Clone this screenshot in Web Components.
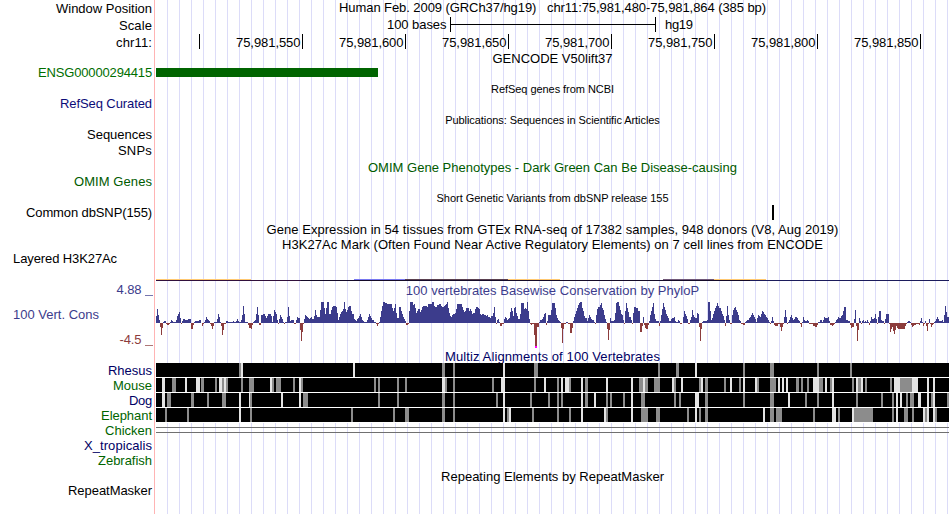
<!DOCTYPE html>
<html lang="en">
<head>
<meta charset="utf-8">
<title>Genome tracks</title>
<style>
  body {
    margin: 0;
    background: white;
    overflow: hidden;
  }
</style>
</head>
<body>
<genome-view>
  <track-row height="17" nudge="1">
    <fit-text slot="label" width="96">Window Position</fit-text>
    <fit-text width="427">Human Feb. 2009 (GRCh37/hg19)   chr11:75,981,480-75,981,864 (385 bp)</fit-text>
  </track-row>
  <track-row height="17" nudge="1">
    <fit-text slot="label" width="33">Scale</fit-text>
    <scale-bar></scale-bar>
  </track-row>
  <track-row height="17" nudge="1">
    <fit-text slot="label" width="36">chr11:</fit-text>
    <base-ruler></base-ruler>
  </track-row>
  <track-row height="14">
    <fit-text width="120">GENCODE V50lift37</fit-text>
  </track-row>
  <track-row height="16">
    <fit-text slot="label" width="114" color="#006e00">ENSG00000294415</fit-text>
    <feature-track items="156 3 222 9" color="#006400"></feature-track>
  </track-row>
  <track-row height="15">
    <fit-text width="123" small>RefSeq genes from NCBI</fit-text>
  </track-row>
  <track-row height="16">
    <fit-text slot="label" width="92" color="#0c0c78">RefSeq Curated</fit-text>
  </track-row>
  <track-row height="15">
    <fit-text width="214.5" small>Publications: Sequences in Scientific Articles</fit-text>
  </track-row>
  <track-row height="16">
    <fit-text slot="label" width="65">Sequences</fit-text>
  </track-row>
  <track-row height="17">
    <fit-text slot="label" width="34">SNPs</fit-text>
  </track-row>
  <track-row height="14">
    <fit-text width="369" color="#005a00">OMIM Gene Phenotypes - Dark Green Can Be Disease-causing</fit-text>
  </track-row>
  <track-row height="16">
    <fit-text slot="label" width="78" color="#005a00">OMIM Genes</fit-text>
  </track-row>
  <track-row height="15">
    <fit-text width="232" small>Short Genetic Variants from dbSNP release 155</fit-text>
  </track-row>
  <track-row height="17">
    <fit-text slot="label" width="126">Common dbSNP(155)</fit-text>
    <feature-track items="772 0 2 15" color="#000"></feature-track>
  </track-row>
  <track-row height="15">
    <fit-text width="572">Gene Expression in 54 tissues from GTEx RNA-seq of 17382 samples, 948 donors (V8, Aug 2019)</fit-text>
  </track-row>
  <track-row height="14">
    <fit-text width="541">H3K27Ac Mark (Often Found Near Active Regulatory Elements) on 7 cell lines from ENCODE</fit-text>
  </track-row>
  <track-row height="32" wide>
    <fit-text slot="label" width="104">Layered H3K27Ac</fit-text>
    <signal-track></signal-track>
  </track-row>
  <conservation-track></conservation-track>
  <track-row height="14">
    <fit-text width="215" color="#000064">Multiz Alignments of 100 Vertebrates</fit-text>
  </track-row>
  <track-row height="15">
    <fit-text slot="label" width="44" color="#000064">Rhesus</fit-text>
    <align-track species="rhesus"></align-track>
  </track-row>
  <track-row height="15">
    <fit-text slot="label" width="39" color="#006400">Mouse</fit-text>
    <align-track species="mouse"></align-track>
  </track-row>
  <track-row height="15">
    <fit-text slot="label" width="23" color="#000064">Dog</fit-text>
    <align-track species="dog"></align-track>
  </track-row>
  <track-row height="15">
    <fit-text slot="label" width="51" color="#006400">Elephant</fit-text>
    <align-track species="elephant"></align-track>
  </track-row>
  <track-row height="15">
    <fit-text slot="label" width="47" color="#006400">Chicken</fit-text>
    <feature-track items="156 4 793 1,156 9 793 1" color="#707070"></feature-track>
  </track-row>
  <track-row height="15">
    <fit-text slot="label" width="68" color="#000064">X_tropicalis</fit-text>
  </track-row>
  <track-row height="16">
    <fit-text slot="label" width="54" color="#006400">Zebrafish</fit-text>
  </track-row>
  <track-row height="14">
    <fit-text width="223">Repeating Elements by RepeatMasker</fit-text>
  </track-row>
  <track-row height="31">
    <fit-text slot="label" width="84">RepeatMasker</fit-text>
  </track-row>
</genome-view>

<script>
// All track graphics use image x coordinates; the data area starts at LEFT.
const LEFT = 156;
const WIDTH = 793;

const rect = (x, y, w, h, fill) =>
  `<rect x="${ x }" y="${ y }" width="${ w }" height="${ h }" fill="${ fill }"/>`;

const svgTrack = (height, body) => `
  <style>
    :host { display: block; }
    svg { display: block; overflow: visible; }
    text { font: 13px "Liberation Sans", sans-serif; }
  </style>
  <svg width="${ WIDTH }" height="${ height }" viewBox="${ LEFT } 0 ${ WIDTH } ${ height }">
    <g shape-rendering="crispEdges">${ body }</g>
  </svg>`;


class GenomeView extends HTMLElement {
  constructor() {
    super();
    this.attachShadow({mode: "open"}).innerHTML = `
      <style>
        :host {
          display: flex;
          flex-direction: column;
          width: 950px;
          height: 514px;
          overflow: hidden;
          font: 13px/15px "Liberation Sans", Arial, sans-serif;
          color: black;
          background:
            linear-gradient(#ffb4b4, #ffb4b4) 154px 0 / 1px 100% no-repeat,
            repeating-linear-gradient(to right, #dcdcf8 0 1px, transparent 1px 12px) 167px 0 / 783px 100% no-repeat;
        }
      </style>
      <slot></slot>`;
  }
}


// One line of text, tracked out or in to a known width.
class FitText extends HTMLElement {
  constructor() {
    super();
    this.attachShadow({mode: "open"}).innerHTML = `
      <style>
        :host { display: block; flex: none; width: max-content; }
        :host([small]) { font-size: 11px; padding-top: 1px; }
        slot { white-space: pre; }
      </style>
      <slot></slot>`;
  }

  connectedCallback() {
    if (this.hasAttribute("color"))
      this.style.color = this.getAttribute("color");

    const target = parseFloat(this.getAttribute("width"));
    const natural = this.getBoundingClientRect().width;
    this.style.letterSpacing = `${ (target - natural) / this.textContent.length }px`;
  }
}


class TrackRow extends HTMLElement {
  constructor() {
    super();
    this.attachShadow({mode: "open"}).innerHTML = `
      <style>
        :host {
          display: grid;
          grid-template-columns: 152px 793px;
          column-gap: 4px;
          flex: none;
        }
        #label { display: flex; justify-content: flex-end; }
        :host([wide]) #label { justify-content: flex-start; padding-left: 13px; }
        #track { display: flex; justify-content: center; }
      </style>
      <div id="label"><slot name="label"></slot></div>
      <div id="track"><slot></slot></div>`;
  }

  connectedCallback() {
    this.style.height = `${ this.getAttribute("height") }px`;
    if (this.hasAttribute("nudge"))
      this.shadowRoot.getElementById("label").style.paddingTop = `${ this.getAttribute("nudge") }px`;
  }
}


class ScaleBar extends HTMLElement {
  constructor() {
    super();
    this.attachShadow({mode: "open"}).innerHTML = svgTrack(17,
      rect(450, 0, 1, 15, "#000") + rect(655, 0, 1, 15, "#000") + rect(450, 7, 206, 1, "#000") +
      `<text x="387" y="12" textLength="59.5">100 bases</text>
       <text x="665" y="12" textLength="28">hg19</text>`);
  }
}


class BaseRuler extends HTMLElement {
  constructor() {
    super();
    let body = rect(199, 0, 1, 15, "#000");
    for (let i = 1; i < 8; i++) {
      const x = 199 + i * 103;
      body += rect(x, 0, 1, 15, "#000");
      body += `<text x="${ x - 66 }" y="13" textLength="64.5">75,981,${ 500 + i * 50 }</text>`;
    }
    this.attachShadow({mode: "open"}).innerHTML = svgTrack(17, body);
  }
}


// items: comma separated "x y width height"
class FeatureTrack extends HTMLElement {
  constructor() {
    super();
    this.attachShadow({mode: "open"});
  }

  connectedCallback() {
    const color = this.getAttribute("color");
    this.shadowRoot.innerHTML = svgTrack(15,
      this.getAttribute("items").split(",").map(i => rect(...i.split(" "), color)).join(""));
  }
}


class SignalTrack extends HTMLElement {
  constructor() {
    super();
    this.attachShadow({mode: "open"}).innerHTML = svgTrack(32,
      rect(156, 28, 95, 1, "#ffc870") +
      rect(354, 28, 51, 1, "#7878f0") +
      rect(405, 28, 103, 1, "#5a4050") +
      rect(508, 28, 52, 1, "#ffc870") +
      rect(663, 28, 51, 1, "#705878") +
      rect(714, 28, 52, 1, "#ffc870") +
      rect(156, 29, 145, 1, "#32103c") +
      rect(301, 29, 449, 1, "#140a28") +
      rect(750, 29, 199, 1, "#1c1c5c"));
  }
}


// PhyloP scores in pixels, one panel per 200px: "offset height", held until the next offset.
const PHYLOP = [
  [150, `6 7,7 14,8 8,9 3,10 -4,11 -12,12 -5,13 1,14 2,16 -1,17 -2,19 -1,20 1,21 3,22 2,23 1,26 3,27 7,28 9,29 11,
    30 5,31 -1,32 2,33 4,35 3,38 4,41 -6,43 -2,44 1,45 2,49 3,51 0,52 -3,53 -1,54 1,55 3,56 6,57 4,58 3,59 2,60 -1,
    61 -3,62 -6,63 -3,64 1,67 4,68 9,69 6,70 1,71 -3,72 -12,73 -7,74 -1,76 2,78 1,83 2,84 1,86 2,87 4,88 2,89 1,
    91 3,92 8,93 17,94 9,95 1,98 -2,99 -5,101 -6,102 -2,103 1,104 2,105 3,106 9,107 16,108 8,109 -2,111 8,113 9,
    115 7,116 5,117 7,118 9,121 7,122 1,123 7,124 13,125 11,126 9,127 3,128 -1,129 4,130 8,131 6,132 4,133 1,
    134 -1,135 1,137 6,138 16,139 7,140 2,141 3,144 -1,146 3,147 6,148 5,150 -7,151 -18,152 -9,153 -1,154 4,155 8,
    156 7,157 6,158 5,159 4,160 5,161 6,162 4,164 7,165 13,166 8,167 6,170 13,171 21,174 15,175 9,176 15,177 21,
    179 9,181 13,182 16,183 17,186 16,187 10,188 3,189 6,190 9,191 11,192 12,193 14,194 21,195 14,196 11,197 13,
    198 16,199 17`],
  [350, `0 17,1 12,2 9,4 4,5 3,6 2,7 4,8 5,9 7,10 9,11 6,12 3,13 2,14 1,17 3,18 6,19 9,20 7,21 5,22 3,24 1,26 -1,27 -3,
    28 -1,29 1,30 6,31 12,32 17,33 21,35 20,37 19,42 15,43 12,44 15,45 19,46 10,47 5,49 16,51 12,52 9,53 6,54 4,
    55 2,56 -2,58 -1,59 12,60 21,63 18,64 19,65 15,66 10,67 12,68 14,70 11,71 13,72 16,73 17,77 16,78 19,82 21,
    84 17,85 16,87 18,89 19,91 17,92 16,94 17,95 18,96 19,97 21,98 15,99 10,100 7,101 6,102 8,103 9,105 10,
    106 14,107 19,112 16,113 13,114 11,115 12,116 15,119 12,120 14,121 12,122 9,123 10,125 14,126 16,128 15,129 14,
    130 9,131 8,132 9,134 8,136 7,137 8,138 6,140 5,141 7,143 10,144 16,145 6,146 -1,147 3,148 4,149 1,150 -3,
    152 -1,154 4,155 6,156 5,157 3,158 4,159 5,160 11,161 15,162 12,163 7,164 15,165 16,166 10,167 7,168 4,170 9,
    171 20,174 14,175 15,176 14,177 21,178 12,179 4,180 -1,181 -2,182 -1,184 -12,185 -25,187 -4,189 1,190 3,192 4,
    193 6,194 9,195 10,196 -2,197 2,198 8`],
  [550, `0 8,1 13,2 20,5 15,6 8,7 5,8 3,9 2,10 1,11 -5,12 -20,13 -6,14 -1,16 1,18 -1,20 -10,22 -5,23 2,24 6,25 9,26 12,
    27 15,28 18,29 20,30 21,32 15,33 12,34 7,35 5,37 2,38 5,39 8,40 6,41 4,42 3,44 1,45 -1,46 8,47 14,48 16,
    50 18,51 20,52 15,53 13,54 8,55 4,56 1,57 -6,58 -17,59 -7,60 5,61 2,64 3,65 10,66 20,67 21,69 17,70 13,71 9,
    72 8,73 3,74 -1,75 12,76 20,77 15,78 11,79 6,81 3,82 -1,83 10,84 16,86 15,88 12,90 -9,92 -3,93 6,94 -2,95 -5,
    96 -6,98 -2,99 2,100 8,101 12,102 16,103 20,104 9,105 4,106 2,109 -3,110 2,111 8,112 14,113 20,114 16,115 13,
    116 9,117 7,118 5,119 2,121 4,122 5,124 6,125 2,126 1,128 3,129 2,130 -1,132 0,133 6,134 12,135 9,136 7,137 4,
    138 -1,140 3,141 6,142 13,143 8,144 6,145 5,147 10,148 9,149 -4,150 -18,151 -6,152 1,153 2,157 3,158 21,
    160 12,161 3,162 5,163 9,164 12,165 15,166 17,167 20,168 17,169 15,171 12,172 9,173 7,174 3,175 -3,176 7,
    177 17,178 8,179 3,180 -1,182 8,183 13,184 15,185 16,186 13,187 11,188 8,189 3,190 2,191 -1,193 -2,195 1,196 2,
    197 3,199 5`],
  [750, `0 6,1 8,2 10,3 8,4 6,5 4,6 1,7 5,8 8,9 7,10 6,11 9,12 12,13 11,14 9,15 8,16 6,17 5,18 3,19 1,20 -1,21 2,22 6,
    23 2,24 -2,25 -3,28 -1,30 -4,31 -8,32 -4,33 -1,34 6,35 13,36 6,37 -1,38 1,39 3,40 6,41 8,42 5,43 3,44 4,45 6,
    47 5,48 3,49 2,50 -1,51 -4,52 1,53 6,54 3,55 2,57 3,58 2,59 -1,63 -3,65 -4,67 -2,68 1,70 3,72 1,73 3,74 6,
    75 5,78 6,79 2,80 -2,82 -3,83 -2,84 -1,85 1,86 3,87 4,88 6,89 5,91 7,92 8,93 12,94 16,96 3,98 2,100 -2,
    101 -5,102 -4,104 4,105 13,106 -3,107 -18,108 -7,109 5,110 2,111 -1,112 2,113 3,114 1,115 2,116 1,117 3,118 1,
    119 -2,120 2,121 6,122 4,124 5,125 9,126 4,127 -1,128 6,129 12,131 3,132 2,134 -1,135 4,136 9,139 -1,140 -9,
    141 -6,142 -4,143 -8,144 -11,145 -7,146 -3,147 -5,148 -6,155 -3,156 -1,157 1,158 2,160 1,161 -2,162 -4,163 -3,
    164 -2,166 -1,169 -2,170 2,171 5,172 1,173 -3,174 -1,175 2,176 -3,177 -8,178 -1,179 4,180 -1,181 -4,182 -2,
    183 -1,184 1,185 2,186 4,187 6,188 4,189 2,192 3,193 1,194 8,195 17,196 11,197 6,199 0`]
];

class ConservationTrack extends HTMLElement {
  constructor() {
    super();
    this.attachShadow({mode: "open"}).innerHTML = `
      <style>
        :host {
          display: grid;
          grid-template-columns: 101px 52px 793px;
          column-gap: 0;
          flex: none;
          height: 66px;
        }
        #name { padding: 24px 0 0 13px; color: #3c3c8c; }
        #axis { display: flex; flex-direction: column; justify-content: space-between; height: 65px; margin-top: -1px; }
        #axis div { display: flex; justify-content: flex-end; gap: 3.5px; }
        #axis i { width: 8px; height: 1px; margin-top: 13px; background: currentColor; opacity: .7; }
        #max { color: #3c3c8c; }
        #min { color: #8c3c3c; }
        #plot { display: flex; flex-direction: column; align-items: center; width: 793px; margin-left: 3px; color: #3c3c8c; }
      </style>
      <div id="name"><fit-text width="86">100 Vert. Cons</fit-text></div>
      <div id="axis">
        <div id="max"><fit-text width="25">4.88</fit-text><i></i></div>
        <div id="min"><fit-text width="22">-4.5</fit-text><i></i></div>
      </div>
      <div id="plot">
        <fit-text width="293.5">100 vertebrates Basewise Conservation by PhyloP</fit-text>
        <svg width="793" height="51" viewBox="156 298 793 51" shape-rendering="crispEdges">${ this.bars() }</svg>
      </div>`;
  }

  bars() {
    const zero = 323;
    let out = "";
    for (const [start, text] of PHYLOP) {
      const steps = text.split(",").map(s => s.trim().split(" ").map(Number));
      steps.forEach(([x, h], i) => {
        const w = (i + 1 < steps.length ? steps[i + 1][0] : 200) - x;
        out += h > 0
          ? rect(start + x, zero - h, w, h, "#3c3c8c")
          : rect(start + x, zero, w, -h, "#8c3c3c");
      });
    }
    // score clipped below the axis
    return out + rect(535, 346, 2, 2, "#ff00ff");
  }
}


// Gaps in each alignment as "x width": g is a weak match, w an unaligned base.
const ALIGN = {
  rhesus: {
    g: "239 2,442 3,453 2,534 4,658 2,676 3,743 2,770 4,817 2,850 2",
    w: "241 2,353 2,503 2,695 2"
  },
  mouse: {
    g: `172 4,201 3,215 2,222 2,226 2,241 2,249 5,272 2,276 5,293 2,301 2,374 2,378 2,397 2,405 2,445 2,453 2,492 2,
      534 2,557 2,569 2,585 3,639 4,645 3,654 6,674 2,699 2,705 3,724 2,739 2,757 2,770 6,796 3,801 2,807 2,819 4,
      830 2,852 2,858 3,865 2,890 2,900 12`,
    w: `162 3,185 2,196 4,219 3,224 2,270 2,299 2,442 3,501 4,544 2,561 2,565 4,581 2,606 2,631 2,643 2,672 2,681 2,
      701 2,730 2,743 2,755 2,778 2,782 2,786 2,813 6,825 2,832 2,856 2,861 2,894 6,912 6,927 2,933 2`
  },
  dog: {
    g: `167 4,191 3,207 2,222 4,250 2,303 5,378 2,397 2,442 3,453 2,496 2,530 2,548 2,557 2,561 2,585 3,606 2,610 2,
      623 2,641 4,674 2,679 2,705 3,743 2,770 4,805 2,817 2,856 2,881 2,892 2,906 2,910 4,931 2,947 2`,
    w: "162 3,239 2,249 1,281 2,299 2,503 2,581 2,594 2,631 2,695 4,788 2,832 2,896 2,900 2,918 3,927 2,933 2"
  },
  elephant: {
    g: `165 2,187 2,250 2,351 2,393 2,405 4,442 3,453 2,507 2,532 2,557 2,569 2,606 2,641 7,656 4,687 2,699 2,705 3,
      770 4,776 6,813 2,838 2,854 19,892 2,904 4,912 2,925 2,935 2`,
    w: "239 2,503 2,509 2,581 2,604 2,631 2,695 2,763 2,832 4,852 2,896 2,923 2,927 2,933 2"
  }
};

class AlignTrack extends HTMLElement {
  constructor() {
    super();
    this.attachShadow({mode: "open"});
  }

  connectedCallback() {
    const data = ALIGN[this.getAttribute("species")];
    const stripes = (list, fill) => list.split(",").map(s => {
      const [x, w] = s.trim().split(" ");
      return rect(x, 0, w, 14, fill);
    }).join("");

    this.shadowRoot.innerHTML = svgTrack(15,
      rect(LEFT, 0, WIDTH, 15, "#fff") + rect(LEFT, 0, WIDTH, 14, "#000") +
      stripes(data.g, "#8c8c8c") + stripes(data.w, "#e4e4e4"));
  }
}

customElements.define("genome-view", GenomeView);
customElements.define("track-row", TrackRow);
customElements.define("fit-text", FitText);
customElements.define("scale-bar", ScaleBar);
customElements.define("base-ruler", BaseRuler);
customElements.define("feature-track", FeatureTrack);
customElements.define("signal-track", SignalTrack);
customElements.define("conservation-track", ConservationTrack);
customElements.define("align-track", AlignTrack);
</script>
</body>
</html>
